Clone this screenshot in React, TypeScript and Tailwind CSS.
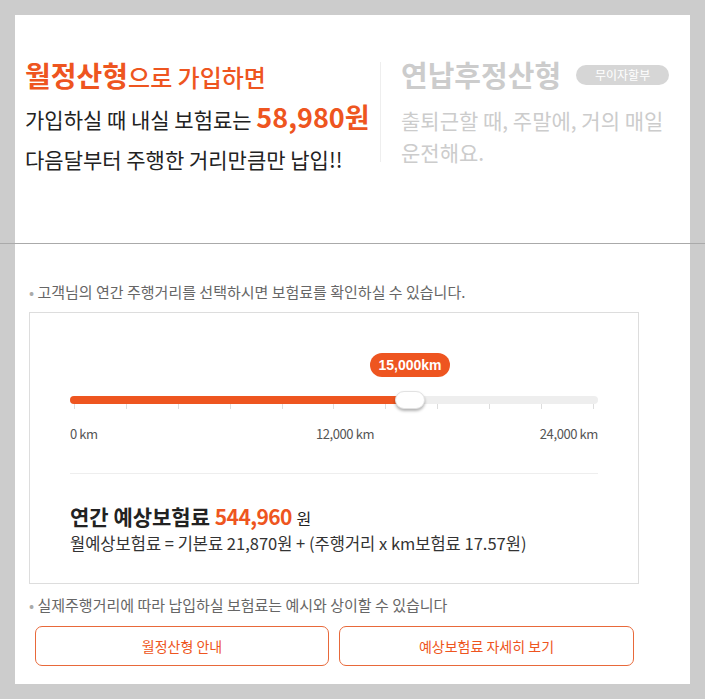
import React from 'react';

const ORANGE = 'text-[#ee5520]';

export default function App() {
  const ticks = Array.from({ length: 11 });

  return (
    <div
      className="min-h-screen bg-[#cccccc] py-[15px]"
      style={{ fontFamily: '"Noto Sans CJK KR", "Noto Sans", sans-serif' }}
    >
      {/* Top: plan intro */}
      <div className="mx-[15px] h-[228px] bg-white pt-[39px] pl-[10px] flex items-start">
        <div className="w-[355px] shrink-0">
          <div className={`h-[42px] leading-[42px] font-bold ${ORANGE} whitespace-nowrap`}>
            <span className="text-[28px]">월정산형</span>
            <span className="text-[24px] font-medium">으로 가입하면</span>
          </div>
          <div className="h-[42px] leading-[42px] text-[21px] text-[#222] whitespace-nowrap">
            가입하실 때 내실 보험료는{' '}
            <span className={`text-[27px] font-bold ${ORANGE}`}>58,980원</span>
          </div>
          <div className="h-[42px] leading-[42px] text-[21px] text-[#222] whitespace-nowrap">
            다음달부터 주행한 거리만큼만 납입!!
          </div>
        </div>
        <div className="mt-[8px] h-[100px] border-l border-[#eeeeee] pl-[20px]">
          <div className="flex h-[26px] items-center">
            <span className="text-[29px] font-bold text-[#cccccc] whitespace-nowrap">연납후정산형</span>
            <span className="ml-[15px] flex h-[20px] w-[93px] items-center justify-center rounded-full bg-[#d6d6d6] text-[12px] text-white">
              무이자할부
            </span>
          </div>
          <p className="mt-[16px] text-[21px] leading-[32px] text-[#cccccc] whitespace-nowrap">
            출퇴근할 때, 주말에, 거의 매일
            <br />
            운전해요.
          </p>
        </div>
      </div>

      <div className="h-px bg-[#aaaaaa]" />

      {/* Bottom: simulator */}
      <div className="mx-[15px] h-[440px] bg-white pt-[38px]">
        <p className="h-[20px] pl-[14px] text-[15px] leading-[20px] text-[#666] whitespace-nowrap">
          <span className="text-[#aaa]">•</span> 고객님의 연간 주행거리를 선택하시면 보험료를 확인하실 수 있습니다.
        </p>

        <div className="ml-[14px] mt-[10px] h-[272px] w-[610px] border border-[#dddddd] px-[40px] pt-[40px]">
          {/* value bubble */}
          <div className="relative h-[24px]">
            <div
              className="absolute top-0 left-[340px] flex h-[24px] w-[80px] -translate-x-1/2 items-center justify-center rounded-full bg-[#ee5520] text-[14px] font-bold text-white"
              style={{ fontFamily: '"Liberation Sans", Arial, sans-serif' }}
            >
              15,000km
            </div>
          </div>

          {/* track */}
          <div className="relative mt-[19px] h-[8px] rounded-full bg-[#eeeeee]">
            <div className="h-full w-[340px] rounded-full bg-[#ee5520]" />
            <div className="absolute top-1/2 left-[340px] h-[18px] w-[30px] -translate-x-1/2 -translate-y-1/2 rounded-full border border-[#e2e2e2] bg-white shadow-[0_2px_3px_rgba(0,0,0,0.3)]" />
          </div>
          <div className="flex h-[5px] justify-between px-[4px]">
            {ticks.map((_, i) => (
              <span key={i} className="h-full w-px bg-[#dddddd]" />
            ))}
          </div>

          <div className="mt-[17px] grid grid-cols-3 text-[13px] leading-[16px] tracking-[-0.4px] text-[#555]">
            <span>0 km</span>
            <span className="pl-[22px] text-center">12,000 km</span>
            <span className="text-right">24,000 km</span>
          </div>

          <div className="mt-[31px] h-px bg-[#eeeeee]" />

          <div className="mt-[27px] h-[30px] text-[21px] leading-[30px] font-bold text-[#222] whitespace-nowrap">
            연간 예상보험료{' '}
            <span className={`${ORANGE} tracking-[-0.6px]`}>544,960</span>{' '}
            <span className="text-[16px] font-normal">원</span>
          </div>
          <p className="h-[24px] text-[16.5px] leading-[24px] text-[#333] whitespace-nowrap">
            월예상보험료 = 기본료 21,870원 + (주행거리 x km보험료 17.57원)
          </p>
        </div>

        <p className="mt-[11px] h-[20px] pl-[14px] text-[15px] leading-[20px] text-[#666] whitespace-nowrap">
          <span className="text-[#aaa]">•</span> 실제주행거리에 따라 납입하실 보험료는 예시와 상이할 수 있습니다
        </p>

        <div className="mt-[11px] flex gap-[10px] pl-[20px]">
          <button
            type="button"
            className={`h-[40px] w-[294px] rounded-[7px] border border-[#e8693a] text-[14px] ${ORANGE}`}
          >
            월정산형 안내
          </button>
          <button
            type="button"
            className={`h-[40px] w-[295px] rounded-[7px] border border-[#e8693a] text-[14px] ${ORANGE}`}
          >
            예상보험료 자세히 보기
          </button>
        </div>
      </div>
    </div>
  );
}
